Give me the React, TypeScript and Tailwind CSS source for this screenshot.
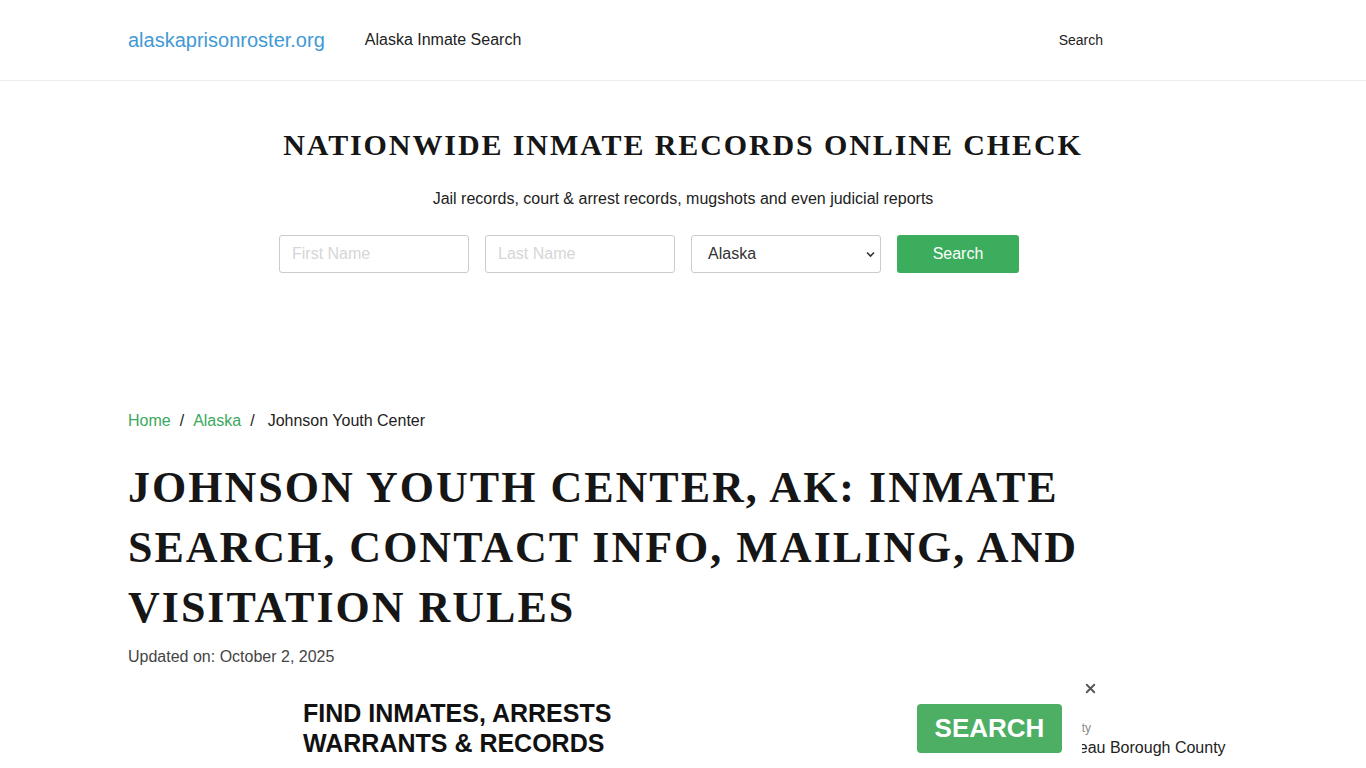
import { X } from 'lucide-react'

const sans = { fontFamily: '"Liberation Sans", Arial, sans-serif' }
const serif = { fontFamily: '"Liberation Serif", "Times New Roman", serif' }

const Header = () => (
  <header className="border-b border-[#ececec] h-[81px]">
    <div className="mx-auto w-[1110px] h-20 flex items-center">
      <a className="text-[20px] text-[#4299d4]">alaskaprisonroster.org</a>
      <a className="ml-10 text-[16px] text-[#222]">Alaska Inmate Search</a>
      <a className="ml-auto mr-[135px] text-[14px] text-[#222]">Search</a>
    </div>
  </header>
)

const Hero = () => (
  <section className="pt-[41px] pb-[100px] flex flex-col items-center">
    <h2 className="text-[30px] font-bold tracking-[1.9px] text-[#161616]" style={serif}>
      NATIONWIDE INMATE RECORDS ONLINE CHECK
    </h2>
    <p className="mt-[20px] text-[16px] text-[#222]">
      Jail records, court &amp; arrest records, mugshots and even judicial reports
    </p>
    <form className="mt-[24px] mr-[68px] flex gap-4">
      <input
        placeholder="First Name"
        className="w-[190px] h-[38px] px-3 border border-[#ccc] rounded-[3px] text-[16px] placeholder:text-[#d6d6d6]"
      />
      <input
        placeholder="Last Name"
        className="w-[190px] h-[38px] px-3 border border-[#ccc] rounded-[3px] text-[16px] placeholder:text-[#d6d6d6]"
      />
      <div className="relative w-[190px] h-[38px] border border-[#ccc] rounded-[3px] flex items-center pl-4 text-[16px] text-[#333]">
        Alaska
        <svg className="absolute right-[5px] top-[15px]" width="9" height="7" viewBox="0 0 9 7">
          <path d="M1 1.5 L4.5 5 L8 1.5" fill="none" stroke="#333" strokeWidth="1.6" />
        </svg>
      </div>
      <button type="button" className="w-[122px] h-[38px] rounded-[3px] bg-[#3cad5c] text-white text-[16px]">
        Search
      </button>
    </form>
  </section>
)

const AdBar = () => (
  <div className="fixed bottom-0 left-1/2 -translate-x-1/2 w-[798px] h-[96px] bg-white" style={sans}>
    <button className="absolute right-[-16px] top-[9px] text-[#555]">
      <X size={15} strokeWidth={3} />
    </button>
    <div className="flex items-center h-full pl-[19px] pr-[20px] pt-[16px]">
      <div className="text-[25px] leading-[30px] font-bold text-[#111]">
        FIND INMATES, ARRESTS
        <br />
        WARRANTS &amp; RECORDS
      </div>
      <button className="ml-auto w-[145px] h-[49px] rounded-[4px] bg-[#4caf64] text-white text-[26px] font-bold">
        SEARCH
      </button>
    </div>
  </div>
)

export default function App() {
  return (
    <div className="min-h-[768px] bg-white" style={sans}>
      <Header />
      <Hero />
      <main className="mx-auto w-[1110px] pt-[36px]">
        <nav className="flex items-center text-[16px] text-[#222]">
          <a className="text-[#3aa85c]">Home</a>
          <span className="mx-[9px]">/</span>
          <a className="text-[#3aa85c]">Alaska</a>
          <span className="ml-[9px] mr-[13px]">/</span>
          <span>Johnson Youth Center</span>
        </nav>
        <h1
          className="mt-[25px] text-[44px] leading-[60px] font-bold tracking-[2px] text-[#161616]"
          style={serif}
        >
          JOHNSON YOUTH CENTER, AK: INMATE SEARCH, CONTACT INFO, MAILING, AND VISITATION RULES
        </h1>
        <p className="mt-[7px] text-[16px] text-[#444]">Updated on: October 2, 2025</p>
        <div className="mt-[50px] flex">
          <div className="ml-auto w-[185px]">
            <div className="text-[12px] text-[#888]">County</div>
            <div className="-mt-[1px] text-[16px] text-[#222]">Juneau Borough County</div>
          </div>
        </div>
      </main>
      <AdBar />
    </div>
  )
}
